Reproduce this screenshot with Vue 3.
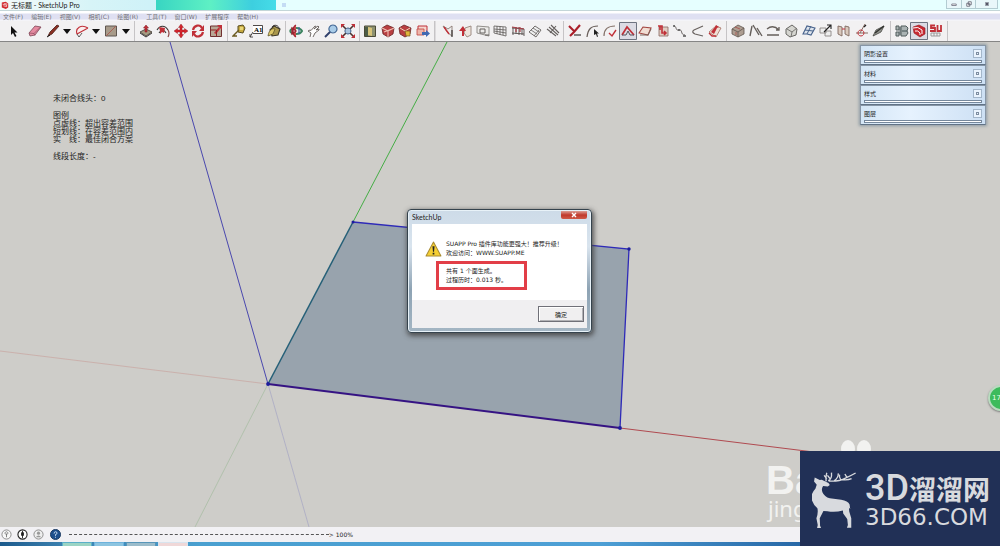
<script setup>
const menus = ['文件(F)', '编辑(E)', '视图(V)', '相机(C)', '绘图(R)', '工具(T)', '窗口(W)', '扩展程序', '帮助(H)']

const R = '#c03038'
const K = '#3a3634'
const N = 'none'

// each stroke set: [path, fill, stroke, stroke width]
const caret = [['M3 5h8l-4 5z', '#111', N, 0]]
const groups = [
  { span: 130, tools: [
    { name: '选择', grow: 23, art: [['M5 2v9l2-2 2 4 1.500-1-2-3.500h3z', '#111', N, 0]] },
    { name: '擦除', grow: 20, art: [['M1 9L7 2l6 1-6 8-5 1z', '#e58aa0', '#7d4656', 0.8], ['M1 9l5 .5 1 2M6 9.500L12.500 3', N, '#8d4c5e', 0.7]] },
    { name: '直线', grow: 17, art: [['M2 12l2-4 7-7 2 1-7 8z', '#8c3024', '#4a2018', 0.8], ['M1 13l3-2', N, '#111', 1]] },
    { name: '直线选项', grow: 12, art: caret },
    { name: '圆弧', grow: 17, art: [['M2 10C0 4 6 0 13 4M2 10L13 4', '#fbeeee', R, 1.1], ['M2 10l2 3 3-4', N, K, 0.8]] },
    { name: '圆弧选项', grow: 12, art: caret },
    { name: '矩形', grow: 18, art: [['M1.500 2h11v10h-11z', '#a89b8a', '#5f5750', 1], ['M2 12L12 2', N, '#a85a50', 0.9]] },
    { name: '矩形选项', grow: 12, art: caret },
  ] },
  { span: 88, tools: [
    { name: '推拉', art: [['M1 8l6-3 6 3-6 4z', '#a59a80', '#4c463e', 0.9], ['M7 1L4.500 4H6v4h2V4h1.500z', R, '#7c1420', 0.5], ['M1 9l6 4 6-4', N, K, 1]] },
    { name: '偏移', art: [['M1 6C4 1 9 1 12 6M3 9c2-3 5-4 7 0', N, K, 1.1], ['M3 3l6 1-1 5-2-1-2 2V7z', R, N, 0], ['M12 6q2 3 0 7', N, '#8e4444', 1.2]] },
    { name: '移动', art: [['M7 0l2.500 3.500H8V6h2.500V4.500L14 7l-3.500 2.500V8H8v2.500h1.500L7 14l-2.500-3.500H6V8H3.500v1.500L0 7l3.500-2.500V6H6V3.500H4.500z', '#d6242c', '#84131c', 0.4]] },
    { name: '旋转', art: [['M2 6C3 1 9 0 11 4M12 8c-1 5-7 6-9 2', N, R, 2.2], ['M13 1v6H8zM1 13V7h5z', R, N, 0]] },
    { name: '缩放', art: [['M1.500 2h11v10.500h-11z', '#b8a795', '#713030', 1], ['M8 1h5v5zM5 9l5-6 1 2-4 5z', R, N, 0], ['M1.500 6h6v6', N, '#8f2222', 1]] },
  ] },
  { span: 53, tools: [
    { name: '卷尺', art: [['M6 2l5-1 2 3-2 5-5-1z', '#c7aa40', '#574c20', 1], ['M7 6L1 12h4', N, '#6b5a20', 1.4], ['M8 3h3v3H8z', '#e8d67a', N, 0]] },
    { name: '文字', label: 'A1', art: [['M4 1.500h9.500v8H4M4 8l-3 5M1 10v3h3', '#fff', K, 0.9]] },
    { name: '颜料桶', art: [['M3 6l4-4 6 3-2 6-6 1z', '#a9974c', '#3c3727', 1.1], ['M1 12C2 5 6 4 8 5l-2 5z', '#ddc768', '#51481e', 0.7], ['M5 3c2-3 7-2 7 2', N, K, 1]] },
  ] },
  { span: 69, tools: [
    { name: '环绕观察', art: [['M1 7c2-4 10-4 12 0-2 4-10 4-12 0', N, '#3c8460', 2], ['M7 1c-4 2-4 10 0 12M3 4l4 3-4 3z', '#c94a4a', '#a02030', 1.3], ['M10 3v7', N, '#3c60a0', 1.2]] },
    { name: '平移', art: [['M3 13l1-4-3-2 2-1 1 .5L8 2l1 .5L7 5l4-3 1 1-3 3 3-1v1L8 9l-2 4', '#fff', '#625b58', 0.9]] },
    { name: '缩放视图', art: [['M9 1a4 4 0 1 1-.1 0z', '#a9cce8', '#466a97', 1.2], ['M6 8l-5 5', N, '#31406c', 2]] },
    { name: '充满视窗', art: [['M1 1l4 4M13 1L9 5M1 13l4-4M13 13L9 9', N, '#4c3330', 1.6], ['M7 4a3 3 0 1 1-.1 0z', '#a8c4de', '#3b5d88', 1], ['M0 0h4L0 4zM14 0v4l-4-4zM0 14v-4l4 4zM14 14h-4l4-4z', R, N, 0]] },
  ] },
  { span: 70, tools: [
    { name: '地图', art: [['M1.500 2h11v10.500h-11z', '#8d9170', '#4a4a37', 1], ['M5 3l4 1v8l-4-1z', '#d7c47a', N, 0], ['M2 3h3v9H2z', '#4c5d47', N, 0]] },
    { name: '3D 模型库', art: [['M1 4l5-3 7 3-1 6-5 3-5-3z', '#b93f42', '#6a2424', 0.8], ['M1 4l6 3 6-3M7 7v6M3 8l8-3', N, '#eec0b4', 1.1]] },
    { name: '分享模型', art: [['M1 4l5-3 7 3-1 6-5 3-5-3z', '#b93f42', '#6a2424', 0.8], ['M2 4l5 3 5-3', N, '#f1d5b7', 1], ['M7 7h5v5H8z', '#e0b63a', '#74551e', 0.7]] },
    { name: '发送布局', art: [['M2 2h9v8H2z', '#f5d5ce', R, 1], ['M1 5h7v6H1z', '#edb5aa', '#c04540', 0.8], ['M6 8h4V6l4 3.500-4 3.500v-2H6z', '#3f69b2', N, 0]] },
  ] },
  { span: 122, wide: true, tools: [
    { name: '绘墙', art: [['M2 2l5 3 4-3v10l-4-3-5-7', '#eee', '#8a7972', 0.9], ['M3 3l5 7', N, R, 1.4], ['M11 6v7', N, K, 1.2]] },
    { name: '拉线升墙', art: [['M6 4l6-2v9l-4 2-3-4z', '#eee5dd', '#95857c', 0.9], ['M4 2l-4 5h3v5h2V7h2z', R, N, 0]] },
    { name: '墙体开窗', art: [['M1 2l12 1v9L1 9z', '#ecebe9', '#87837f', 0.9], ['M4 5h5v4H4zM9 11h4', N, '#65615e', 1]] },
    { name: '玻璃幕墙', art: [['M1 2l12 1v9L1 9zM4 2v8M7 2v9M10 3v8M1 5l12 1M1 7l12 2', N, '#6a6664', 0.9]] },
    { name: '玻璃栏杆', art: [['M1 4l12 1v7M2 3v8M5 3v7M8 3v8M11 4v7M1 9l12 1', N, '#554e4c', 0.9], ['M1 3l12 2M5 3v5M9 3v5', N, '#a84048', 1.2]] },
    { name: '楼梯', art: [['M1 8l6-6 6 4-5 7z', '#eee', '#65615f', 0.9], ['M3 6l6 4M5 4l6 4M6 12l5-6', N, '#65615f', 0.8]] },
    { name: '坡道', art: [['M1 5l9 7M3 3l9 8M5 1l8 8M4 9l6-7', N, '#65615f', 1.1]] },
  ] },
  { span: 158, tools: [
    { name: '修复直线', art: [['M1 2l6 6M12 1L6 8l-4 4', N, '#aa1e29', 2.1], ['M6 11h7', N, K, 1.2]] },
    { name: '选连续线', art: [['M1 13C2 5 5 2 12 2', N, '#675d58', 1.2], ['M8 5v6l2-1 1 3 1-.5-1-3h2z', '#222', N, 0]] },
    { name: '焊接线条', art: [['M1 12C1 5 5 2 12 2', N, '#85736b', 1.2], ['M6 9l3 3 4-6', N, R, 1.4]] },
    { name: '生成面域', active: true, art: [['M1 11l5-8 7 8', N, R, 1.7], ['M1 11h4l2-4 2 4h4', N, '#55515a', 1]] },
    { name: '路径成面', art: [['M1 9l4-6 8 1-3 7z', '#f1ddd3', '#a2443f', 1.1], ['M2 11h8l3-6', N, '#7b6960', 1]] },
    { name: '自由矩形', art: [['M3 3h9v9H3z', '#e0ccc2', '#896760', 0.8], ['M2 2h4v7h4M4 2v4M8 7l2 2-2 2', N, R, 1.6]] },
    { name: '贝兹曲线', art: [['M1 2c3 0 1 5 5 4s1 5 6 5', N, '#66605f', 1], ['M0 2h2M5 6h2M10 12h3', N, '#555', 1.6]] },
    { name: '线倒圆角', art: [['M12 2L3 6q-3 2 1 4l8 2', N, '#6a6360', 1.2]] },
    { name: '拉伸面', art: [['M1 8l7-6 5 2-5 9z', '#efdfd5', '#a46f61', 0.8], ['M8 1l3 2-2 1-3 6-3-2 4-5z', R, N, 0], ['M1 9l3 3h4', N, R, 1.3]] },
  ] },
  { span: 159, tools: [
    { name: '形体弯曲', art: [['M1 5l6-4 6 3v6l-6 3-6-3z', '#ad9d91', '#5e544e', 0.8], ['M1 5l6 3 6-4M7 8v5', N, '#665b55', 0.9], ['M4 3l5 2M5 8v3', N, '#a85550', 0.9]] },
    { name: '镜像物体', art: [['M3 2L1 12M4 1l6 10M8 4l5 8', N, '#655f5b', 1.4]] },
    { name: '路径阵列', art: [['M1 5q6-5 12 1M10 6h3V3M1 11h12', N, '#655f5b', 1.3]] },
    { name: '球体', art: [['M2 5l6-4 5 4-1 6-6 2-4-3z', '#d5d5d0', '#676663', 1], ['M3 5l5 3 5-4M8 8l-1 5', N, '#787774', 1]] },
    { name: '组件阵列', art: [['M1 10l4-8 8 2-4 7-4-1z', '#dce3ec', '#47628b', 1.1], ['M3 6l8 1M9 2l-4 8', N, '#47628b', 1]] },
    { name: '超级缩放', art: [['M1 4h6v5H1zM6 7h6v5H6z', '#eee', '#8a8785', 0.9], ['M5 8l7-7M8 1h4v4', N, '#222', 1.1]] },
    { name: '对齐', art: [['M1 2l4 1v9l-4-2zM8 2l4 1v9l-4-2z', '#d9c9bd', '#7e685d', 0.9], ['M5 5h3', N, R, 1]] },
    { name: '辅助线', art: [['M1 9h12M10 0L5 9', N, '#856b61', 1], ['M6 6a3 3 0 1 1-.1 0z', N, R, 1], ['M9 3l2-2', N, '#222', 1.2]] },
    { name: '刀具', art: [['M1 12l3-6 8-4-3 6z', '#939590', '#454641', 0.8], ['M3 9l9-7', N, '#2e302c', 1.3]] },
  ] },
  { span: 52, tools: [
    { name: '显示边线', art: [['M1 2h3v4H1zM1 8h3v4H1zM6 2h5l2 2-1 3 1 2-2 3H6z', '#aab3b3', '#505c5d', 1], ['M5 3v8M7 7h5', N, '#435354', 1]] },
    { name: 'SUAPP 面板', active: true, art: [['M1 3l6-2 6 3v6l-5 3-6-4z', '#c82a32', '#8e1722', 0.6], ['M1 4q5-2 9 2v4M3 7q3-1 5 2v2', N, '#fff', 1]] },
    { name: 'SUAPP', art: [['M6 1.500H2v2.500h4v3H1M8.500 1v6H12V1', N, R, 1.8], ['M2 9h9v3H2zM5 9v3M8 9v3', N, '#999', 1]] },
  ] },
]

const trays = ['阴影设置', '材料', '样式', '图层']
const tasks = [
  ['#9bd4c4', '#5bb0c9'],
  ['#8cc4e0', '#6cb2dc'],
  ['#9bbccb', '#5896b9'],
  ['#f0d8d8', '#d8e4ee'],
]
</script>

<template>
  <div class="window">
    <header class="titlebar">
      <svg class="logo" viewBox="0 0 10 10"><path d="M1 2l5-1 3 2v5L6 10 1 8z" fill="#d22a30" /><path d="M2 4l5 1v2L3 6M4 3l4 1" fill="none" stroke="#fff" stroke-width=".8" /></svg>
      <h1>无标题 - SketchUp Pro</h1>
      <div class="glass"></div>
      <div class="spot"></div>
      <div class="controls">
        <button aria-label="最小化"><svg viewBox="0 0 10 8"><path d="M2 4h6v2H2z" fill="#fff" stroke="#667" /></svg></button>
        <button aria-label="还原"><svg viewBox="0 0 10 8"><path d="M4 1h4v4H4zM2 3h4v4H2z" fill="#fff" stroke="#556" /></svg></button>
        <button aria-label="关闭"><svg viewBox="0 0 10 8"><path d="M3 2l4 4M7 2L3 6" stroke="#556" stroke-width="2" /></svg></button>
      </div>
    </header>

    <nav class="menubar">
      <a v-for="m in menus" :key="m" href="#">{{ m }}</a>
    </nav>

    <div class="toolbar">
      <div v-for="(g, i) in groups" :key="i" class="group" :class="{ wide: g.wide }" :style="{ flexGrow: g.span }">
        <button v-for="t in g.tools" :key="t.name" class="tool" :class="{ active: t.active }" :aria-label="t.name" :style="{ flexGrow: t.grow || 18 }">
          <svg viewBox="0 0 14 14">
            <path v-for="(p, j) in t.art" :key="j" :d="p[0]" :fill="p[1]" :stroke="p[2]" :stroke-width="p[3]" />
            <text v-if="t.label" x="5" y="8">{{ t.label }}</text>
          </svg>
        </button>
      </div>
      <div class="rest"></div>
    </div>

    <main class="viewport">
      <svg class="scene" viewBox="0 42 1000 485" preserveAspectRatio="xMinYMin slice">
        <g fill="none" stroke-width="1">
          <path d="M0 351L268 384" stroke="#c9aaa5" stroke-width=".8" />
          <path d="M268 384L195 527" stroke="#a9bea5" stroke-width=".8" />
          <path d="M268 384L309 527" stroke="#aaa9c4" stroke-width=".8" />
          <path d="M170 42L268 384" stroke="#4a48ae" />
          <path d="M447 42L353 222" stroke="#45ad45" />
          <path d="M620 428L830 454" stroke="#b04a50" />
        </g>
        <path d="M353 222L629 249 620 428 268 384z" fill="#98a3ad" />
        <path d="M353 222L629 249 620 428" fill="none" stroke="#2e2ab8" stroke-width="1.300" />
        <path d="M353 222L268 384" stroke="#266078" stroke-width="1.500" />
        <path d="M268 384L620 428" stroke="#351383" stroke-width="2" />
        <g fill="#1c1c9c"><circle cx="353" cy="222" r="1.500" /><circle cx="629" cy="249" r="1.700" /><circle cx="620" cy="428" r="1.900" /><circle cx="268" cy="384" r="1.900" /></g>
      </svg>

      <section class="notes">
        <p>未闭合线头：0</p>
        <p>图例<br>点虚线：超出容差范围<br>短划线：在容差范围内<br>实　线：最佳闭合方案</p>
        <p>线段长度：-</p>
      </section>

      <aside class="trays">
        <section v-for="t in trays" :key="t" class="tray">
          <div class="tray-head"><h2>{{ t }}</h2><button :aria-label="'关闭' + t"></button></div>
          <div class="tray-body"></div>
        </section>
      </aside>

      <div class="dialog" role="dialog" aria-labelledby="dialog-title">
        <div class="dialog-head">
          <h2 id="dialog-title">SketchUp</h2>
          <button aria-label="关闭对话框"><svg viewBox="0 0 8 6"><path d="M2 1l4 4M6 1L2 5" stroke="#fff" stroke-width="1.400" /></svg></button>
        </div>
        <div class="dialog-body">
          <svg class="warn" viewBox="0 0 16 15"><path d="M8 1l7 13H1z" fill="#f5cf35" stroke="#a98b30" stroke-linejoin="round" /><path d="M7 5h2l-.5 5h-1zM7.200 11h1.600v1.600H7.200z" fill="#222" /></svg>
          <div class="message">
            <p>SUAPP Pro 插件库功能更强大！推荐升级！<br>欢迎访问：WWW.SUAPP.ME</p>
            <p class="result">共有 1 个面生成。<br>过程历时：0.013 秒。</p>
          </div>
        </div>
        <div class="dialog-foot"><button>确定</button></div>
      </div>

      <button class="badge" aria-label="加速">17</button>

      <div class="watermark">
        <svg viewBox="0 0 32 22"><ellipse cx="8" cy="11" rx="7" ry="9" /><ellipse cx="24" cy="11" rx="7" ry="9" /></svg>
        <b>Ba</b>
        <span>jing</span>
      </div>
    </main>

    <footer class="status">
      <button aria-label="地理位置"><svg viewBox="0 0 12 12"><circle cx="6" cy="6" r="5" fill="#f8f8f8" stroke="#888" /><path d="M6 3a1.500 1.500 0 1 1-.1 0M6 5v4" fill="none" stroke="#777" /></svg></button>
      <button aria-label="归属"><svg viewBox="0 0 12 12"><circle cx="6" cy="6" r="5" fill="#fff" stroke="#222" stroke-width="1.200" /><path d="M6 2v8M5 4h2v3H5z" fill="#222" stroke="#222" /></svg></button>
      <button aria-label="登录"><svg viewBox="0 0 12 12"><circle cx="6" cy="6" r="5" fill="#eee" stroke="#888" /><circle cx="6" cy="4.500" r="1.700" fill="#999" /><path d="M3 9q3-4 6 0z" fill="#999" /></svg></button>
      <button class="help" aria-label="帮助"><svg viewBox="0 0 12 12"><circle cx="6" cy="6" r="5.500" fill="#1d4f8c" stroke="#17365c" /><path d="M4.500 5q0-2 1.600-2t1.500 1.500Q7.500 6 6 6v1.500M6 8.500v1" fill="none" stroke="#cfe0f4" /></svg></button>
      <div class="dashes"></div>
      <span class="tip">&gt;</span>
      <span>100%</span>
    </footer>
    <div class="taskbar">
      <svg v-for="(t, i) in tasks" :key="i" viewBox="0 0 30 4" preserveAspectRatio="none"><path d="M0 0h30v4H0z" :fill="t[1]" /><path d="M1 1h28v3H1z" :fill="t[0]" /></svg>
    </div>

    <div class="brand">
      <svg viewBox="186 118 134 176">
        <path d="M194 140l15 8 6-1 20 10 4 6-6 4-14-1q-6 8-2 18 6 14 22 18l34 5q20 3 25 14l2 14-4-5 1 12 6 20v28h-13l3-8-2-18-12-16-1-9q-24 6-46 2l-12-1-11 22 1 22 3 7h-12l2-9-4-20q6-16 3-30-14-12-18-30 0-16 12-28l4-12-8-10z" fill="#d8dade" />
        <path d="M228 152q-2-14 2-26M230 144l-8-10M234 150q12-4 10-24M240 144l-8-10M236 151q30 2 48-8 18-8 32-16M252 150q14-10 12-22M272 148q-6-8-4-16M290 140l-6-10M270 146q20 4 34-2" fill="none" stroke="#d8dade" stroke-width="4" />
      </svg>
      <div class="brand-text">
        <strong><span>3D</span>溜溜网</strong>
        <small>3D66.COM</small>
      </div>
    </div>
  </div>
</template>

<style>
html, body { margin: 0; }
</style>

<style scoped>
.window { position: relative; display: flex; flex-direction: column; height: 100vh; overflow: hidden; background: #f1f0f2; color: #222; font-family: "DejaVu Sans", "Noto Sans CJK SC", sans-serif; font-size: 6px; }
button { margin: 0; padding: 0; border: 0; background: none; color: inherit; font: inherit; display: flex; align-items: center; justify-content: center; }
h1, h2, p { margin: 0; font-weight: 400; font-size: inherit; }
svg { display: block; }

.titlebar { display: flex; align-items: center; flex: none; height: 10px; padding-left: 1px; border-bottom: 1px solid #c4d6d8; background: linear-gradient(90deg, #f4fafa, #d7f4f7 9%, #cff2f8 15%, #e6ffff 28%); }
.logo { width: 8px; height: 8px; }
h1 { flex: 0 0 14.5%; padding-left: 2px; white-space: nowrap; font-family: Lato, "Noto Sans CJK SC", sans-serif; font-size: 7px; line-height: 10px; }
.glass { flex: 0 0 12%; height: 10px; background: linear-gradient(90deg, #38d5c2, #5ef0c4 45%, #3dcfdf 80%, #46dce8); }
.spot { width: 4px; height: 4px; margin-left: 6px; background: #c4dcf4; }
.controls { display: flex; margin-left: auto; margin-right: 2px; height: 8px; align-self: flex-start; border: 1px solid #b3ccd2; border-top: 0; background: #e9f7fa; }
.controls button { width: 14px; }
.controls button:last-child { width: 22px; }
.controls button + button { border-left: 1px solid #b3ccd2; }
.controls svg { width: 8px; height: 6px; }

.menubar { display: flex; flex: none; gap: 8px; height: 9px; padding: 1px 3px 0; background: linear-gradient(#fff 2px, #dfe0f2 3px, #dfe0f2 8px, #f4f4f8 9px); }
.menubar a { color: #707076; text-decoration: none; line-height: 9px; white-space: nowrap; }

.toolbar { display: flex; flex: none; height: 20px; border-bottom: 1px solid #858585; background: #f2f1f2; }
.group { display: flex; flex: 1 1 0; min-width: 0; box-sizing: border-box; padding: 1px 2px; border-right: 1px solid #c6c4c6; }
.group.wide { padding-left: 4px; border-left: 1px solid #dddbdd; }
.rest { flex: 52 1 0; }
.tool { flex: 1 1 0; min-width: 0; border-radius: 1px; }
.tool.active { background: #dcdce4; box-shadow: inset 0 0 0 1px #6e7480; }
.tool svg { flex: none; width: 14px; height: 14px; }
.tool text { font-family: "Liberation Serif", serif; font-size: 7px; font-weight: 700; }

.viewport { position: relative; flex: 1; min-height: 0; overflow: hidden; background: #cecdc9; }
.scene { position: absolute; inset: 0; width: 100%; height: 100%; }
.notes { position: absolute; left: 53px; top: 53px; display: grid; gap: 9px; font-family: "Liberation Sans", "Noto Sans CJK SC", sans-serif; font-size: 8px; line-height: 8px; white-space: nowrap; }

.trays { position: absolute; right: 14px; top: 3px; width: 126px; box-shadow: 0 0 3px 1px #8c99a2; }
.tray { box-sizing: border-box; height: 20px; padding: 0 3px; border: 1px solid #8796a6; border-bottom-color: #617386; background: linear-gradient(90deg, #d4e6f6, #e6f2fe 40%, #cde0f4); }
.tray-head { display: flex; align-items: center; justify-content: space-between; height: 14px; }
.tray-head button { box-sizing: border-box; width: 9px; height: 9px; border: 1px solid #a3b6ca; background: #e9f3fd; }
.tray-head button::before { content: ""; width: 1px; height: 1px; border: 1px solid #7d8da0; }
.tray-body { height: 1px; border: 1px solid #75879b; background: #fff; }

.dialog { position: absolute; left: 407px; top: 167px; box-sizing: border-box; width: 185px; padding: 0 4px 4px; border: 1px solid #35434d; border-radius: 4px; background: linear-gradient(#cddbe8, #d9e4ee 30%, #8ea3b4 65%, #a4b6c4); box-shadow: inset 0 0 0 1px #e8f2f8, 1px 2px 5px 1px #444d; }
.dialog-head { display: flex; justify-content: space-between; height: 14px; font-family: Lato, sans-serif; font-size: 7px; line-height: 14px; }
.dialog-head button { width: 26px; height: 8px; margin-top: 1px; border-radius: 0 0 2px 2px; background: linear-gradient(#dda096, #c0392c 50%, #cf5a48); }
.dialog-head svg { width: 8px; height: 6px; }
.dialog-body { display: flex; gap: 4px; height: 61px; padding: 15px 0 0 13px; background: #fff; }
.warn { width: 17px; height: 16px; margin-top: 2px; flex: none; }
.message { line-height: 9px; white-space: nowrap; }
.result { box-sizing: border-box; width: 91px; margin: 4px 0 0 -10px; padding: 2px 7px 3px; border: 3px solid #e23e47; }
.dialog-foot { display: flex; justify-content: flex-end; height: 16px; padding: 6px 3px; background: #f0eff1; }
.dialog-foot button { box-sizing: border-box; width: 46px; height: 16px; border: 1px solid #707078; background: #f0eff0; box-shadow: inset 1px 1px #fff, inset -1px -1px #b2b2b6; }

.badge { position: absolute; right: -14px; top: 343px; width: 26px; height: 26px; padding-right: 9px; border: 2px solid #b9dbbf; border-radius: 50%; background: #3dbb5c; color: #eaffea; font-size: 7px; box-shadow: 0 1px 2px #777; }
.watermark { position: absolute; right: 0; bottom: 0; width: 234px; height: 90px; color: #f2f2f0; font-family: "Liberation Sans", sans-serif; }
.watermark svg { width: 32px; height: 22px; margin-left: 74px; margin-top: 1px; fill: #f2f2f0; }
.watermark b { display: block; font-size: 40px; line-height: 40px; }
.watermark span { display: block; padding-left: 2px; font-family: "Noto Sans", sans-serif; font-size: 22px; line-height: 16px; }

.status { display: flex; align-items: center; flex: none; height: 15px; padding-left: 1px; background: #f2f1f4; }
.status button { margin-right: 5px; }
.status .help { margin-left: 1px; margin-right: 8px; }
.status svg { width: 11px; height: 11px; }
.dashes { width: 26%; border-top: 1px dashed #555; }
.tip { margin-right: 2px; }
.taskbar { display: flex; flex: none; gap: 2px; height: 4px; padding-left: 62px; background: linear-gradient(90deg, #1c5a8c, #3a7fae 6%, #4aa0d0 20%, #4d9fd5 60%, #2767a6 80%); }
.taskbar svg { width: 30px; height: 4px; }

.brand { position: absolute; right: 0; bottom: 0; display: flex; box-sizing: border-box; width: 200px; height: 95px; padding: 19px 0 0 12px; gap: 8px; background: #213056; color: #d8dade; }
.brand > svg { width: 45px; height: 59px; flex: none; }
.brand-text { white-space: nowrap; }
.brand strong { display: flex; align-items: center; height: 37px; font-family: "Noto Sans CJK SC", sans-serif; font-size: 27px; font-weight: 700; line-height: 37px; }
.brand strong span { font-family: Roboto, sans-serif; font-size: 36px; font-weight: 500; }
.brand small { display: block; font-family: "DejaVu Sans", sans-serif; font-size: 23px; line-height: 20px; }
</style>
